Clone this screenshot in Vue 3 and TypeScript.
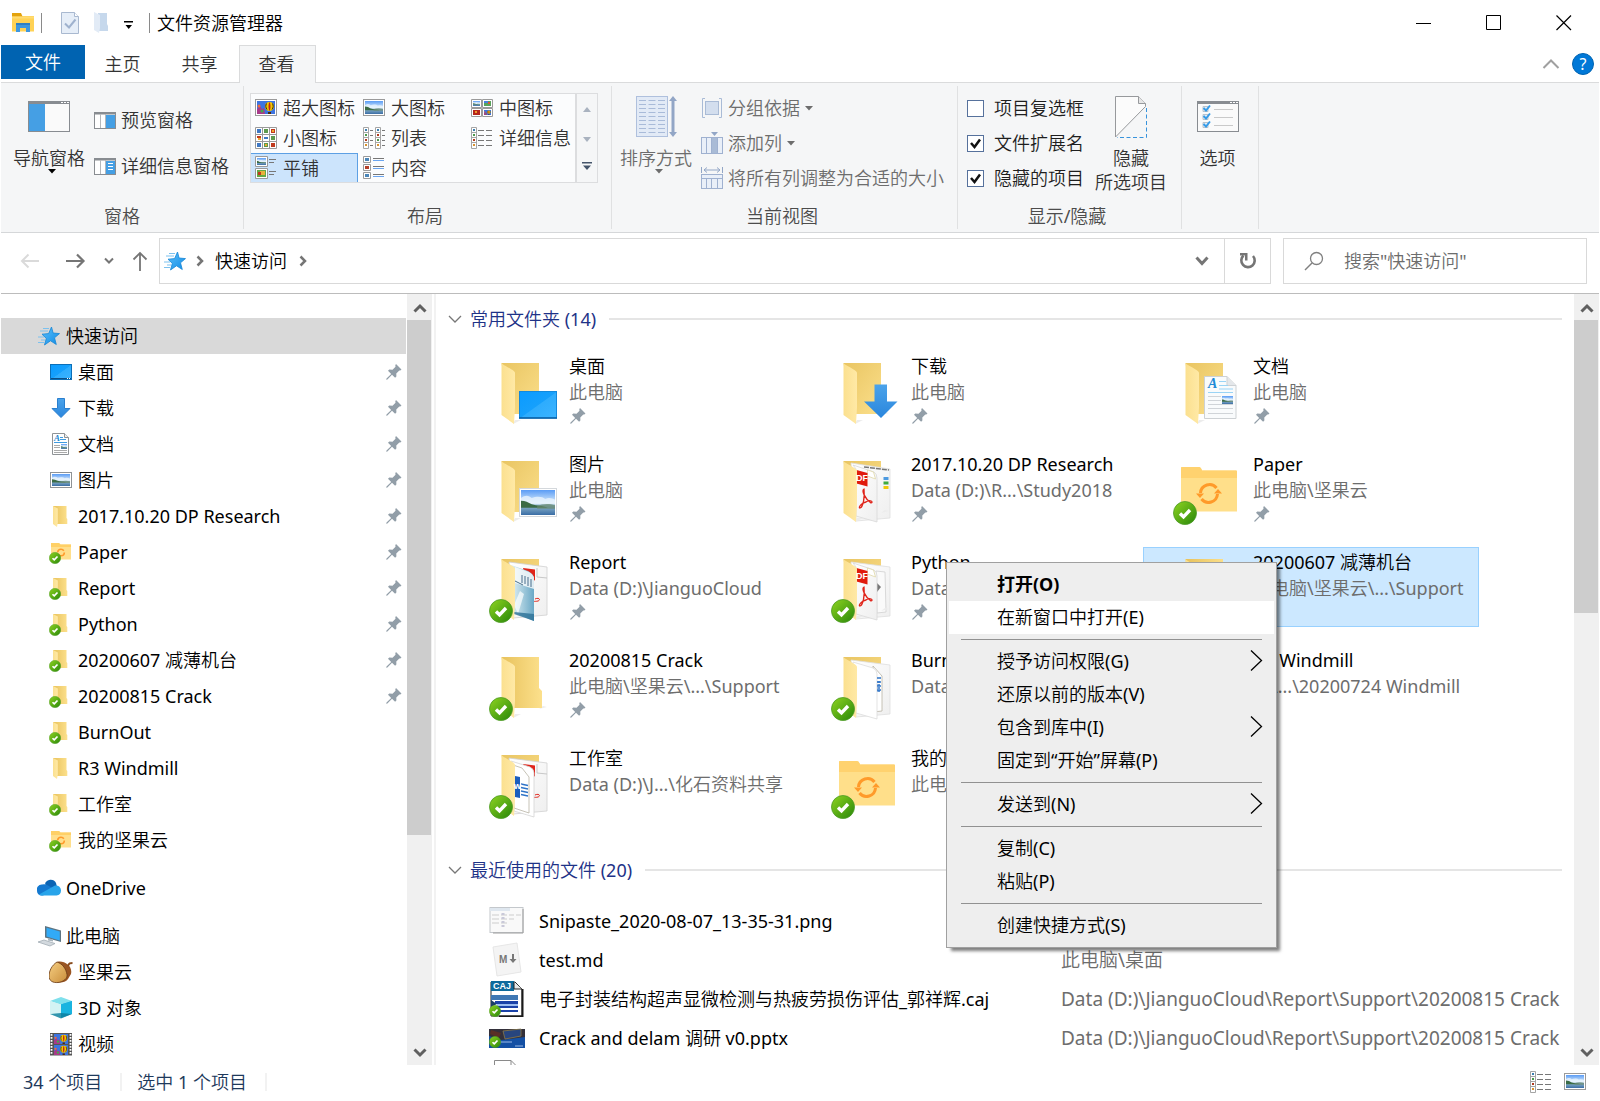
<script setup lang="ts">
import { ref } from 'vue'

interface NavItem { icon: string; label: string; level: number; pin?: boolean; badge?: boolean; gap?: boolean; selected?: boolean }
interface Tile { icon: string; name: string; path: string; pin?: boolean; badge?: boolean; selected?: boolean }
interface RecentFile { icon: string; name: string; path: string }
interface MenuItem { label?: string; bold?: boolean; hover?: boolean; sub?: boolean }

const tabs: string[] = ['主页', '共享', '查看']

const layouts = [
  { icon: 'g-xl', label: '超大图标' },
  { icon: 'g-lg', label: '大图标' },
  { icon: 'g-md', label: '中图标' },
  { icon: 'g-sm', label: '小图标' },
  { icon: 'g-list', label: '列表' },
  { icon: 'g-detail', label: '详细信息' },
  { icon: 'g-tile', label: '平铺' },
  { icon: 'g-content', label: '内容' },
]
const activeLayout = ref('平铺')

const toggles = ref([
  { id: 'show-boxes', label: '项目复选框', on: false },
  { id: 'show-ext', label: '文件扩展名', on: true },
  { id: 'show-hidden', label: '隐藏的项目', on: true },
])

const navItems: NavItem[] = [
  { icon: 'star', label: '快速访问', level: 0, selected: true },
  { icon: 'desktop', label: '桌面', level: 1, pin: true },
  { icon: 'download', label: '下载', level: 1, pin: true },
  { icon: 'doc', label: '文档', level: 1, pin: true },
  { icon: 'picture', label: '图片', level: 1, pin: true },
  { icon: 'folder', label: '2017.10.20 DP Research', level: 1, pin: true },
  { icon: 'nut-folder', label: 'Paper', level: 1, pin: true, badge: true },
  { icon: 'folder', label: 'Report', level: 1, pin: true, badge: true },
  { icon: 'folder', label: 'Python', level: 1, pin: true, badge: true },
  { icon: 'folder', label: '20200607 减薄机台', level: 1, pin: true, badge: true },
  { icon: 'folder', label: '20200815 Crack', level: 1, pin: true, badge: true },
  { icon: 'folder', label: 'BurnOut', level: 1, badge: true },
  { icon: 'folder', label: 'R3 Windmill', level: 1 },
  { icon: 'folder', label: '工作室', level: 1, badge: true },
  { icon: 'nut-folder', label: '我的坚果云', level: 1, badge: true },
  { icon: 'onedrive', label: 'OneDrive', level: 0, gap: true },
  { icon: 'pc', label: '此电脑', level: 0, gap: true },
  { icon: 'acorn', label: '坚果云', level: 1 },
  { icon: 'cube', label: '3D 对象', level: 1 },
  { icon: 'video', label: '视频', level: 1 },
]

const tiles: Tile[] = [
  { icon: 't-desktop', name: '桌面', path: '此电脑', pin: true },
  { icon: 't-download', name: '下载', path: '此电脑', pin: true },
  { icon: 't-doc', name: '文档', path: '此电脑', pin: true },
  { icon: 't-picture', name: '图片', path: '此电脑', pin: true },
  { icon: 't-research', name: '2017.10.20 DP Research', path: 'Data (D:)\\R...\\Study2018', pin: true },
  { icon: 't-nut', name: 'Paper', path: '此电脑\\坚果云', pin: true, badge: true },
  { icon: 't-report', name: 'Report', path: 'Data (D:)\\JianguoCloud', pin: true, badge: true },
  { icon: 't-python', name: 'Python', path: 'Data (D:)', pin: true, badge: true },
  { icon: 't-empty', name: '20200607 减薄机台', path: '此电脑\\坚果云\\...\\Support', pin: true, badge: true, selected: true },
  { icon: 't-empty', name: '20200815 Crack', path: '此电脑\\坚果云\\...\\Support', pin: true, badge: true },
  { icon: 't-burnout', name: 'BurnOut', path: 'Data (D:)', badge: true },
  { icon: 't-empty', name: 'R3 Windmill', path: 'D:\\...\\20200724 Windmill' },
  { icon: 't-studio', name: '工作室', path: 'Data (D:)\\J...\\化石资料共享', badge: true },
  { icon: 't-nut', name: '我的坚果云', path: '此电脑', badge: true },
]

const recent: RecentFile[] = [
  { icon: 'f-png', name: 'Snipaste_2020-08-07_13-35-31.png', path: '' },
  { icon: 'f-md', name: 'test.md', path: '此电脑\\桌面' },
  { icon: 'f-caj', name: '电子封装结构超声显微检测与热疲劳损伤评估_郭祥辉.caj', path: 'Data (D:)\\JianguoCloud\\Report\\Support\\20200815 Crack' },
  { icon: 'f-ppt', name: 'Crack and delam 调研 v0.pptx', path: 'Data (D:)\\JianguoCloud\\Report\\Support\\20200815 Crack' },
  { icon: 'f-page', name: '', path: '' },
]

// letters printed on top of document icons
const glyphs: Record<string, string> = {
  doc: 'A',
  't-doc': 'A',
  't-research': 'DF',
  't-python': 'DF',
  't-studio': 'w',
  'f-md': 'M',
  'f-caj': 'CAJ',
}

const menu: MenuItem[] = [
  { label: '打开(O)', bold: true },
  { label: '在新窗口中打开(E)', hover: true },
  {},
  { label: '授予访问权限(G)', sub: true },
  { label: '还原以前的版本(V)' },
  { label: '包含到库中(I)', sub: true },
  { label: '固定到“开始”屏幕(P)' },
  {},
  { label: '发送到(N)', sub: true },
  {},
  { label: '复制(C)' },
  { label: '粘贴(P)' },
  {},
  { label: '创建快捷方式(S)' },
]
</script>

<template>
  <div class="window">
    <!-- shared icon sprite -->
    <svg class="sprite" width="0" height="0" aria-hidden="true">
      <defs>
        <linearGradient id="gFlap" x1="0" y1="0" x2="1" y2="0"><stop offset="0" stop-color="#fbe08f" /><stop offset="1" stop-color="#ffe9a6" /></linearGradient>
        <linearGradient id="gBack" x1="0" y1="0" x2="1" y2="1"><stop offset="0" stop-color="#e9c562" /><stop offset="1" stop-color="#fbdf8b" /></linearGradient>
        <linearGradient id="gBack2" x1="0" y1="0" x2="1" y2="0"><stop offset="0" stop-color="#e8c25c" /><stop offset="1" stop-color="#fce08c" /></linearGradient>
        <linearGradient id="gDesk" x1="0" y1="0" x2="1" y2="1"><stop offset="0" stop-color="#0a9bff" /><stop offset=".5" stop-color="#16a0fc" /><stop offset=".52" stop-color="#2eacfd" /><stop offset="1" stop-color="#3cb4ff" /></linearGradient>
        <linearGradient id="gSky" x1="0" y1="0" x2="0" y2="1"><stop offset="0" stop-color="#5a9cf5" /><stop offset=".5" stop-color="#d8ebfb" /><stop offset=".62" stop-color="#8fb6cc" /><stop offset="1" stop-color="#3a6da5" /></linearGradient>
        <linearGradient id="gArrow" x1="0" y1="0" x2="0" y2="1"><stop offset="0" stop-color="#4ba3ea" /><stop offset="1" stop-color="#2a86dd" /></linearGradient>
        <linearGradient id="gOk" x1="0" y1="0" x2="1" y2="1"><stop offset="0" stop-color="#8fd420" /><stop offset="1" stop-color="#27860a" /></linearGradient>
        <linearGradient id="gPage" x1="0" y1="0" x2="1" y2="1"><stop offset="0" stop-color="#ffffff" /><stop offset="1" stop-color="#efefef" /></linearGradient>
        <linearGradient id="gBlue" x1="0" y1="0" x2="1" y2="0"><stop offset="0" stop-color="#e2f1f5" /><stop offset="1" stop-color="#6aa8c6" /></linearGradient>
        <linearGradient id="gNut" x1="0" y1="0" x2="1" y2="1"><stop offset="0" stop-color="#f6cf83" /><stop offset="1" stop-color="#c98d3a" /></linearGradient>
        <linearGradient id="gStar" x1="0" y1="0" x2="1" y2="1"><stop offset="0" stop-color="#5cc0fa" /><stop offset="1" stop-color="#0f8be6" /></linearGradient>
      </defs>

      <symbol id="pin" viewBox="0 0 16 16">
        <path fill="#929ea8" d="M10 0l5.500 5.500-1.200 1-1-.1-3 3 .1 3-1.300 1.300L6 10.700l-4.600 4.800-1.200.3.300-1.200L5.200 10 2 6.800l1.300-1.200 3.200.1 3-3L9.300 1.300z" />
      </symbol>
      <symbol id="badge" viewBox="0 0 24 24">
        <circle cx="12" cy="12" r="11.500" fill="url(#gOk)" stroke="#4d9a26" stroke-width=".8" />
        <path d="M7 12.500l3.500 3.300L17 9" fill="none" stroke="#fff" stroke-width="3.400" />
      </symbol>
      <symbol id="landscape" viewBox="0 0 38 28" preserveAspectRatio="none">
        <rect width="38" height="28" fill="url(#gSky)" />
        <path d="M0 9c5-4 9-3 12 0 5-2 12-2 15 1 4-2 8-1 11 1v5H0z" fill="#eaf4fd" opacity=".8" />
        <path d="M0 12c5 0 8 2 12 4 6 2 12 1 18 4H0z" fill="#3b6b45" />
        <path d="M18 18c6-3 14-3 20-1v4H18z" fill="#66886c" opacity=".7" />
      </symbol>
      <symbol id="balloon" viewBox="0 0 18 13" preserveAspectRatio="none">
        <rect width="18" height="13" fill="#3d74e0" />
        <path d="M0 8l3-3 2 3 2-1 1 6H0z" fill="#a83a8a" /><circle cx="2" cy="5" r="1.500" fill="#f06a3a" /><circle cx="5" cy="10" r="1.500" fill="#3fae4a" />
        <circle cx="12.500" cy="5.500" r="4.500" fill="#f2c800" /><path d="M12.500 1c-1.300 2-1.300 7 0 9 1.300-2 1.300-7 0-9" fill="#c1201d" /><path d="M9.500 2.500c-1 2-1 4 .5 6M15.500 2.500c1 2 1 4-.5 6" stroke="#3a2a10" fill="none" /><path d="M11 11h3v2h-3z" fill="#4b2a10" />
      </symbol>

      <!-- title bar -->
      <symbol id="explorer" viewBox="0 0 22 20">
        <path d="M0 3h22v15.500H0z" fill="#ffd255" /><path d="M0 0h9l1.500 3.500H0z" fill="#e3a20d" /><path d="M0 3.500h22v2H0z" fill="#ffdb70" />
        <path d="M4 10h14v9h-4v-4H8v4H4z" fill="#3f97de" /><path d="M4 10h14v2H4z" fill="#2f7fc4" />
      </symbol>
      <symbol id="q-check" viewBox="0 0 18 22"><path d="M.5.500h13l4 4v17H.5z" fill="#e6eef8" stroke="#a9b9d0" /><path d="M13.500.5v4h4" fill="#fff" stroke="#a9b9d0" /><path d="M4 11.500l4 4 6.500-8" fill="none" stroke="#9fb2ce" stroke-width="2" /></symbol>
      <symbol id="q-folder" viewBox="0 0 15 22"><path d="M4 1h9v11l1 2v5H4z" fill="#c6d8ec" /><path d="M0 0l6 3v13l-1 5-5-3z" fill="#e2ebf6" /></symbol>

      <!-- ribbon: large, 48 x 46 -->
      <symbol id="r-nav" viewBox="0 0 48 46"><rect x="3.500" y="5.500" width="41" height="30" fill="#fafafa" stroke="#888c91" /><path d="M3 5h42v3H3z" fill="#888c91" /><path d="M4 8h16v27H4z" fill="#459fe4" /><path d="M36 6h2v1h-2zM39 6h2v1h-2zM42 6h2v1h-2z" fill="#fff" /></symbol>
      <symbol id="r-sort" viewBox="0 0 48 46">
        <rect x="4.500" y=".5" width="31" height="40" fill="#e2eaf6" stroke="#afc0dd" />
        <path d="M7 4.500h26M7 8.500h26M7 12.500h26M7 16.500h26M7 20.500h26M7 24.500h26M7 28.500h26M7 32.500h26M7 36.500h26" stroke="#a9bbd9" stroke-width="1.200" stroke-dasharray="7 2.500" />
        <path d="M39.500 4h3v33h-3z" fill="#92a6c6" /><path d="M41 0l4 5h-8zM41 41l4-5h-8z" fill="#92a6c6" />
      </symbol>
      <symbol id="r-hide" viewBox="0 0 48 46"><path d="M8.500 41V.5h23l7 7v3z" fill="#fbfbfb" stroke="#97999c" /><path d="M31.500.5v7h7" fill="#e6e6e6" stroke="#97999c" /><path d="M39.500 12v29.500H10" fill="none" stroke="#3793dc" stroke-dasharray="4 2.500" /></symbol>
      <symbol id="r-options" viewBox="0 0 48 46"><rect x="3.500" y="5.500" width="41" height="30" fill="#fafafa" stroke="#888c91" /><path d="M3 5h42v3H3z" fill="#888c91" /><path d="M36 6h2v1h-2zM39 6h2v1h-2zM42 6h2v1h-2z" fill="#fff" /><path d="M9 10.500h5v5H9zM9 18.500h5v5H9zM9 26.500h5v5H9z" fill="#e5edf5" stroke="#b9c3cc" /><path d="M9.500 12l2.500 2.500 4-5M9.500 20l2.500 2.500 4-5M9.500 28l2.500 2.500 4-5" fill="none" stroke="#359be8" stroke-width="2" /><path d="M20 13.500h19M20 21.500h19M20 29.500h19" stroke="#c9c9c9" /></symbol>

      <!-- ribbon: small, 22 x 22 -->
      <symbol id="r-preview" viewBox="0 0 22 22"><rect x=".5" y="3.500" width="21" height="16" fill="#fff" stroke="#888c91" /><path d="M0 3h22v2.500H0z" fill="#888c91" /><path d="M6.500 5v14M11.500 5v14" stroke="#b5b8bb" /><path d="M12 6h9v13h-9z" fill="#459fe4" /></symbol>
      <symbol id="r-details" viewBox="0 0 22 22"><use href="#r-preview" /><path d="M14 8.500h5M14 11.500h5M14 14.500h5" stroke="#fff" /></symbol>
      <symbol id="r-group" viewBox="0 0 22 22"><path d="M4 1.500H1.500v19H4M18 1.500h2.500v19H18" fill="none" stroke="#a9bbd6" /><rect x="4.500" y="4.500" width="13" height="13" fill="#d3deee" stroke="#a9bbd6" /></symbol>
      <symbol id="r-addcol" viewBox="0 0 22 22"><rect x=".5" y="5.500" width="21" height="16" fill="#e9eff8" stroke="#9fb1d0" /><path d="M5.500 5v17M10.500 5v17M16.500 5v17" stroke="#9fb1d0" /><path d="M11 6h5v15h-5z" fill="#a9bbd6" /><path d="M10 0h7l-3.500 4z" fill="#92a6c6" /></symbol>
      <symbol id="r-fit" viewBox="0 0 22 22"><path d="M.5 0v6M21.500 0v6M3 3h16M6 .5L3 3l3 2.500M16 .5L19 3l-3 2.500" fill="none" stroke="#92a6c6" /><rect x=".5" y="7.500" width="21" height="14" fill="#e9eff8" stroke="#9fb1d0" /><path d="M1 11.500h20M5.500 12v10M10.500 12v10M16.500 12v10" stroke="#9fb1d0" /></symbol>

      <!-- layout gallery, 24 x 24 -->
      <symbol id="g-xl" viewBox="0 0 24 24"><rect x=".5" y="3.500" width="21" height="16" fill="#fff" stroke="#9a9a9a" /><use href="#balloon" x="2" y="5" width="18" height="13" /></symbol>
      <symbol id="g-lg" viewBox="0 0 24 24"><rect x=".5" y="3.500" width="21" height="16" fill="#fff" stroke="#9a9a9a" /><use href="#landscape" x="2" y="5" width="18" height="13" /></symbol>
      <symbol id="g-md" viewBox="0 0 24 24"><path d="M.5 3.500h10v8H.5zM11.500 3.500h10v8h-10zM.5 12.500h10v8H.5zM11.500 12.500h10v8h-10z" fill="#fff" stroke="#9a9a9a" /><use href="#landscape" x="2" y="5" width="7" height="5" /><path d="M13 5h7v5h-7z" fill="#58a35a" /><path d="M13 5h4v2h-4z" fill="#4b7fe0" /><path d="M17 6h2v2h-2z" fill="#e0523a" /><path d="M2 14h7v5H2z" fill="#b5251a" /><path d="M4 15h2v2H4z" fill="#f09a2a" /><use href="#balloon" x="13" y="14" width="7" height="5" /></symbol>
      <symbol id="g-sm" viewBox="0 0 24 24">
        <path d="M.5 1.500h21v21H.5zM7.500 1v22M14.500 1v22M0 8.500h22M0 15.500h22" fill="#fff" stroke="#9a9a9a" />
        <path d="M2 3h4v4H2zM9 11h4v2H9zM2 17h4v4H2z" fill="#3e78c4" /><path d="M9 3h4v4H9zM16 10h4v4h-4zM9 17h4v4H9z" fill="#5c9a4e" /><path d="M16 3h4v4h-4zM2 10h4v2H2zM16 17h4v4h-4z" fill="#c03a1e" /><path d="M3 12h3v2H3zM17 4h2v2h-2zM10 18h2v2h-2z" fill="#f0a830" />
      </symbol>
      <symbol id="g-list" viewBox="0 0 24 24">
        <path d="M.5 1.500h5v21h-5zM0 6.500h6M0 11.500h6M0 16.500h6M12.500 1.500h5v21h-5zM12 6.500h6M12 11.500h6M12 16.500h6" fill="#fff" stroke="#a5a5a5" />
        <path d="M2 3h2v2H2zM14 3h2v2h-2z" fill="#3c7fb0" /><path d="M2 8h2v2H2zM14 13h2v2h-2z" fill="#4c9a4c" /><path d="M2 13h2v2H2zM14 8h2v2h-2z" fill="#b03a1e" /><path d="M2 18h2v2H2zM14 18h2v2h-2z" fill="#d9922e" />
        <path d="M7 4.500h3M7 9.500h3M7 14.500h3M7 19.500h3M19 4.500h3M19 9.500h3M19 14.500h3M19 19.500h3" stroke="#777" />
      </symbol>
      <symbol id="g-detail" viewBox="0 0 24 24">
        <path d="M.5 1.500h5v21h-5zM0 6.500h6M0 11.500h6M0 16.500h6" fill="#fff" stroke="#a5a5a5" />
        <path d="M2 3h2v2H2z" fill="#3c7fb0" /><path d="M2 8h2v2H2z" fill="#4c9a4c" /><path d="M2 13h2v2H2z" fill="#b03a1e" /><path d="M2 18h2v2H2z" fill="#d9922e" />
        <path d="M7 4.500h6M15 4.500h6M7 9.500h6M15 9.500h6M7 14.500h6M15 14.500h6M7 19.500h6M15 19.500h6" stroke="#777" />
      </symbol>
      <symbol id="g-tile" viewBox="0 0 24 24"><path d="M.5 .5h12v10H.5zM.5 12.500h12v10H.5z" fill="#fff" stroke="#9a9a9a" /><use href="#landscape" x="2" y="2" width="9" height="7" /><path d="M2 14h9v7H2z" fill="#64a846" /><path d="M5 15h5v4H5z" fill="#e8b13a" /><path d="M3 16h3v3H3z" fill="#c03a1e" /><path d="M14 3.500h7M14 6.500h5M14 15.500h7M14 18.500h5" stroke="#777" /></symbol>
      <symbol id="g-content" viewBox="0 0 24 24"><path d="M.5 .5h7v6h-7zM.5 8.500h7v6h-7zM.5 16.500h7v6h-7z" fill="#fff" stroke="#9a9a9a" /><path d="M2 2h4v3H2zM2 18h4v3H2z" fill="#4b86b8" /><path d="M2 10h4v3H2z" fill="#b5402a" /><path d="M10 2.500h11M10 10.500h11M10 18.500h11" stroke="#777" /><path d="M10 4.500h11M10 12.500h11M10 20.500h11" stroke="#6aa5f0" /></symbol>

      <!-- navigation pane, 24 x 24 -->
      <symbol id="star" viewBox="0 0 24 24"><path d="M14.500 3l1.600 6 6.400.6-5 4.200 1.800 6.700-5.800-3.700L7.500 21l1.800-6.600L5 10.200l6.600-.6z" fill="url(#gStar)" stroke="#1687d6" stroke-width=".8" /><path d="M6 4.500h6M3 7h8M1 13h6M4 16h4M1 18.500h6" stroke="#7cc1ee" stroke-width="1" /></symbol>
      <symbol id="desktop" viewBox="0 0 24 24"><rect x="1.500" y="4.500" width="21" height="15" fill="url(#gDesk)" stroke="#0b6fb8" /><path d="M2 18.500h20" stroke="#0d4f86" /><path d="M18 18.500h1M20 18.500h1" stroke="#fff" /></symbol>
      <symbol id="download" viewBox="0 0 24 24"><path d="M8.500 2.500h7v10h5.500L12 21.500 3 12.500h5.500z" fill="url(#gArrow)" stroke="#2a7fcf" /></symbol>
      <symbol id="doc" viewBox="0 0 24 24"><path d="M3.500 1.500h12l4 4v17h-16z" fill="#fff" stroke="#8f9396" /><path d="M15.500 1.500v4h4" fill="#eee" stroke="#8f9396" /><path d="M11 5.500h3M11 7.500h6M5 10.500h13" stroke="#3f9be0" /><path d="M5 13.500h6M5 15.500h6M5 18.500h13M5 20.500h13" stroke="#aaa" /><use href="#landscape" x="12" y="12" width="6" height="5" /></symbol>
      <symbol id="picture" viewBox="0 0 24 24"><rect x="1.500" y="4.500" width="21" height="15" fill="#fff" stroke="#8f9396" /><use href="#landscape" x="3" y="6" width="18" height="12" /></symbol>
      <symbol id="folder" viewBox="0 0 24 24"><path d="M4 2h13.500v12l.8 1v5H8z" fill="url(#gBack2)" /><path d="M4 2l4.800 2.500v14L8 23l-4-3z" fill="url(#gFlap)" /></symbol>
      <symbol id="nut-folder" viewBox="0 0 24 24"><path d="M2 3h8l1.500 1.500H22v15H2z" fill="#ffdf8c" /><path d="M2 3h8l1.500 1.500H22V7H2z" fill="#ffd066" /><circle cx="12" cy="12.500" r="3.300" fill="none" stroke="#ff9a2a" stroke-width="1.600" stroke-dasharray="8 2.400" /></symbol>
      <symbol id="onedrive" viewBox="0 0 24 24"><path d="M8 8a6 6 0 0 1 11-1l1 4-7 3z" fill="#0a64b4" /><path d="M0 15a5 5 0 0 1 5-6.500 7 7 0 0 1 6 1l7 4-12 6H4.500A4.500 4.500 0 0 1 0 15z" fill="#1479d0" /><path d="M18 9.500a5 5 0 0 1 6 5 5 5 0 0 1-4.500 5H4a5 5 0 0 1-2-1z" fill="#28a4ea" /></symbol>
      <symbol id="pc" viewBox="0 0 24 24"><path d="M8 2l16 4.500V18L8 13.500z" fill="#5d7482" /><path d="M9.500 3.800l13.300 3.700v9L9.500 12.500z" fill="#31aaf7" /><path d="M11 14l5 1.500v2l-5-1z" fill="#a8b3bb" /><path d="M1 18l6-2 11 3.500-5 2.500z" fill="#d3d9de" stroke="#9aa5ae" stroke-width=".7" /></symbol>
      <symbol id="acorn" viewBox="0 0 24 24"><path d="M8 2c7-2 16 4 14 12l-3 5c-3 4-8 4-12 3C0 21-1 15 2 9z" fill="#9a5522" /><path d="M8 2C3 5 0 11 0 16c0 5 4 7 9 6.500 5-.5 10-4 9-8C17 9 14 4 8 2z" fill="url(#gNut)" stroke="#6a3a15" stroke-width=".8" /><path d="M19 6c1-3 2-3 4.500-3" fill="none" stroke="#8a4c1e" stroke-width="2" /></symbol>
      <symbol id="cube" viewBox="0 0 24 24"><path d="M1 5l11-4 11 4-11 4z" fill="#7fe0ec" /><path d="M1 5l11 3.500V22L1 18z" fill="#c9eff2" /><path d="M23 5L12 8.500V22l11-4z" fill="#0f9fd6" /><path d="M1 18l11-3 11 3-11 4.500z" fill="#0e7f9c" opacity=".8" /><path d="M1 5l11 3.500V17L1 18z" fill="#d4f3f4" /><path d="M23 5L12 8.500V17l11 1z" fill="#19b4e0" /></symbol>
      <symbol id="video" viewBox="0 0 24 24"><path d="M1 1h22v22.500H1z" fill="#555" /><path d="M2.500 2v21M21.500 2v21" stroke="#fff" stroke-width="1.800" stroke-dasharray="1.800 1.200" /><use href="#balloon" x="5" y="2" width="14" height="10" /><use href="#balloon" x="5" y="13" width="14" height="10" /></symbol>

      <!-- folder tiles, 72 x 72 -->
      <symbol id="fold-back" viewBox="0 0 72 72"><path d="M12.500 6H50v51H20z" fill="url(#gBack)" /></symbol>
      <symbol id="fold-flap" viewBox="0 0 72 72"><path d="M12.500 6c1 2 13 7 13.500 9.700V50l-1 17-12.500-9z" fill="url(#gFlap)" /></symbol>
      <symbol id="fold-shadow" viewBox="0 0 72 72"><path d="M24 67l8-4h-6zM50 58l8-2-4-1z" fill="#ececec" /></symbol>
      <symbol id="pdf" viewBox="0 0 72 72">
        <path d="M22 10l21 7q3 2 3 6v44L25 61V14z" fill="url(#gPage)" stroke="#d8d8d8" stroke-width=".8" />
        <path d="M36.500 15l6 2 2 7-8-3z" fill="#fff" stroke="#e0d8a8" stroke-width=".8" />
        <path d="M25.500 15l11 3v13.500l-11-3z" fill="#e01b0d" />
        <path d="M33 34c-3 1 1 10 7 14 3-1-1-4-5-1-5 1-8 6-6 6 3-1 5-10 4-19z" fill="none" stroke="#e0241a" stroke-width="1.300" />
      </symbol>
      <symbol id="t-empty" viewBox="0 0 72 72"><use href="#fold-shadow" /><path d="M12.500 6H50v31l3 3v17H20z" fill="url(#gBack2)" /><use href="#fold-flap" /></symbol>
      <symbol id="t-desktop" viewBox="0 0 72 72"><use href="#fold-back" /><use href="#fold-shadow" /><use href="#fold-flap" /><rect x="30.500" y="34.500" width="37" height="26.500" fill="url(#gDesk)" stroke="#1389dd" /><path d="M30 61h38" stroke="#0a5fa5" stroke-width="1.500" /></symbol>
      <symbol id="t-download" viewBox="0 0 72 72"><use href="#fold-back" /><use href="#fold-shadow" /><use href="#fold-flap" /><path d="M43.500 27.500H56v17h10.500L50 61 33 44.500h10.500z" fill="url(#gArrow)" /></symbol>
      <symbol id="t-doc" viewBox="0 0 72 72"><use href="#fold-back" /><use href="#fold-shadow" /><use href="#fold-flap" /><path d="M31.500 19.500H54l9 9v33H31.500z" fill="#f9fbfc" stroke="#cdd1d4" /><path d="M54 19.500v9h9" fill="#e4e7ea" stroke="#cdd1d4" /><path d="M46 24.500h7M46 28.500h9M46 32h14M35 35.500h25" stroke="#9ad4f5" stroke-width="1.200" /><path d="M35 39.500h13M35 43.500h13M35 47.500h25M35 51.500h25M35 56.500h25" stroke="#d0d4d8" /><use href="#landscape" x="49" y="39" width="11" height="8" /></symbol>
      <symbol id="t-picture" viewBox="0 0 72 72"><use href="#fold-back" /><use href="#fold-shadow" /><use href="#fold-flap" /><rect x="30.500" y="33.500" width="37" height="28" fill="#fff" stroke="#d4d8dc" /><use href="#landscape" x="32" y="35" width="34" height="25" /></symbol>
      <symbol id="t-nut" viewBox="0 0 72 72"><path d="M8 13q0-1 1-1h17q2 0 3 3.500h34q1 0 1 1v40H8z" fill="#ffdf8a" /><path d="M8 13q0-1 1-1h17q2 0 3 3.500h34q1 0 1 1V23H8z" fill="#ffd26f" /><path d="M27.500 38a9 9 0 0 1 16-5M44.500 39a9 9 0 0 1-16 5" fill="none" stroke="#ff9a2a" stroke-width="3" /><path d="M23 38.500h8l-4 4.500zM41 38.500h8L45 34z" fill="#ff9a2a" /></symbol>
      <symbol id="t-research" viewBox="0 0 72 72"><use href="#fold-back" /><path d="M20 8l39 6v49l-34 3z" fill="url(#gPage)" stroke="#dedede" stroke-width=".8" /><path d="M33 12l25 3" stroke="#777" stroke-width="1.500" stroke-dasharray="5 1" /><path d="M52.500 22h5v3h-5z" fill="#4d9ae0" /><path d="M52.500 26.500h5v3h-5z" fill="#3faa3f" /><path d="M52.500 31h5v3h-5z" fill="#f0c808" /><use href="#fold-shadow" /><use href="#pdf" /><use href="#fold-flap" /></symbol>
      <symbol id="t-python" viewBox="0 0 72 72"><use href="#fold-back" /><path d="M20 9l39 5v49l-34 3z" fill="url(#gPage)" stroke="#dedede" stroke-width=".8" /><path d="M45 18l9 1 1 40-9 1z" fill="#fafafa" stroke="#d0d0d0" stroke-width=".8" /><path d="M46 30v9l4-5z" fill="#777" /><use href="#fold-shadow" /><use href="#pdf" /><use href="#fold-flap" /></symbol>
      <symbol id="t-report" viewBox="0 0 72 72"><use href="#fold-back" /><path d="M20 9l38 5v48l-34 3z" fill="url(#gPage)" stroke="#d0d0d0" stroke-width=".8" /><path d="M34 15l12 1.500v11L36 24z" fill="#e0241a" /><path d="M48 15v9l10 1" fill="none" stroke="#c8c8c8" /><path d="M46 46c4-2 6 1 3 2-4 1-3-1-6 3" fill="none" stroke="#e0241a" /><path d="M22 12l17 6q6 3 6 8v42l-20-8z" fill="url(#gBlue)" /><path d="M26 14l14 5q4 2 5 5v12l-19-6z" fill="#fbfcfd" opacity=".8" /><path d="M26 28l8 4M33 22v8M36 23v8M39 24v9M42 26v8" stroke="#486f8c" /><path d="M25 52l6-14 4 3-6 20z" fill="#fff" opacity=".7" /><path d="M25 59l20 2v7l-20-7z" fill="#2c7096" opacity=".8" /><use href="#fold-flap" /></symbol>
      <symbol id="t-burnout" viewBox="0 0 72 72"><use href="#fold-back" /><path d="M20 9l39 5v49l-34 3z" fill="url(#gPage)" stroke="#dedede" stroke-width=".8" /><path d="M42 15l9 10v35l-9 1z" fill="#fff" stroke="#b9b4a5" stroke-width=".8" /><path d="M45 31h4M45 34h4M45 37h4M45 40h4" stroke="#2f74c8" stroke-width="1.500" /><path d="M22 11l20 6q4 2 4 6v45L25 62z" fill="#fff" stroke="#dcdcdc" stroke-width=".8" /><path d="M46 27h4M46 31h4M46 35h4M46 39h4" stroke="#2f74c8" stroke-width="1.500" /><use href="#fold-flap" /></symbol>
      <symbol id="t-studio" viewBox="0 0 72 72"><use href="#fold-back" /><path d="M20 9l38 5v48l-34 3z" fill="url(#gPage)" stroke="#d0d0d0" stroke-width=".8" /><path d="M34 15l12 1.500v11L36 24z" fill="#e0241a" /><path d="M48 15v9l10 1" fill="none" stroke="#c8c8c8" /><path d="M46 46c4-2 6 1 3 2-4 1-3-1-6 3" fill="none" stroke="#e0241a" /><path d="M22 12l19 6q4 2 4 6v44L25 62z" fill="#fff" stroke="#d4d4d4" stroke-width=".8" /><path d="M24 16l9 3 7 9v36l-15-5z" fill="#fff" stroke="#b9b4a5" stroke-width=".8" /><path d="M26 27l5 1v21l-5-1z" fill="#1b5dbe" /><path d="M32 35l7 1.500M32 38.500l7 1.500M32 42l7 1.500M32 45.500l7 1.500" stroke="#2f74c8" stroke-width="1.300" /><use href="#fold-flap" /></symbol>

      <!-- recent files, 36 x 36 -->
      <symbol id="f-png" viewBox="0 0 36 36"><rect x="1" y="4.500" width="33" height="25" fill="#f9f9f9" stroke="#c4c8cc" /><path d="M1 5h20v3H1z" fill="#dfe7ef" /><path d="M3 12h7M3 16h7M3 20h7M12 12h6M12 16h6M12 20h6M20 12h5M20 16h5M27 12h5" stroke="#dcdcdc" stroke-width="1.500" /><path d="M14 10v16" stroke="#c9c9d9" stroke-width="3" stroke-dasharray="2 2" /><path d="M34 6v24H4" fill="none" stroke="#9e9e9e" /></symbol>
      <symbol id="f-md" viewBox="0 0 36 36"><path d="M4 5l24-4 4 29-24 4z" fill="#f4f4f4" stroke="#e6e6e6" /><path d="M24 12v6" stroke="#777" stroke-width="2" /><path d="M20.500 17h7L24 21z" fill="#777" /></symbol>
      <symbol id="f-caj" viewBox="0 0 36 36"><path d="M2 1h24l7 7v27H2z" fill="#fff" stroke="#222" /><path d="M33.500 8v27.500H10" fill="none" stroke="#1a1a1a" stroke-width="2" /><path d="M2 0h23v10H2z" fill="#0d6a9c" /><path d="M25 1v7h8" fill="#e8e8e8" stroke="#222" /><path d="M2 14h27v5H2z" fill="#3f78b4" /><path d="M6 20h23v3H6zM8 25h21v2H8zM8 29h21v2H8z" fill="#1b42a8" /><path d="M8 23h21v2H8z" fill="#9dbdf0" /><path d="M2 19l6 4-6 3z" fill="#1c3f66" /><use href="#badge" x="0" y="24" width="12" height="12" /></symbol>
      <symbol id="f-ppt" viewBox="0 0 36 36"><path d="M0 9h36v19H0z" fill="#1450a4" /><path d="M0 9h36v8L12 20 0 16z" fill="#33303a" /><path d="M14 11l18-2v7l-16 3z" fill="#27457e" stroke="#8b7a49" stroke-width=".8" /><path d="M2 10l10 3-2 5-9-4z" fill="#5a3026" /><path d="M11 22h12M26 26h8" stroke="#9dbbe6" /><use href="#badge" x="0" y="16" width="12" height="12" /></symbol>
      <symbol id="f-page" viewBox="0 0 36 36"><path d="M5.500 36V1.500H22l6 6V36" fill="#fff" stroke="#8a8a8a" /><path d="M22 1.500v6h6" fill="none" stroke="#8a8a8a" /></symbol>
    </svg>

    <header class="titlebar">
      <svg class="app-icon" width="22" height="20"><use href="#explorer" /></svg>
      <i class="vline"></i>
      <button class="quick q1" aria-label="属性"><svg width="18" height="22"><use href="#q-check" /></svg></button>
      <button class="quick q2" aria-label="新建文件夹"><svg width="15" height="22"><use href="#q-folder" /></svg></button>
      <button class="quick q3" aria-label="自定义快速访问工具栏"><svg width="10" height="8" viewBox="0 0 10 8"><path d="M0 0h9v1.500H0zM1.500 4h6.500L4.700 8z" /></svg></button>
      <i class="vline"></i>
      <h1>文件资源管理器</h1>
      <div class="win-buttons">
        <button aria-label="最小化"><svg width="16" height="16"><path d="M0 8.500h15" stroke="#000" /></svg></button>
        <button aria-label="最大化"><svg width="16" height="16"><path d="M.5.500h14v14H.5z" fill="none" stroke="#000" /></svg></button>
        <button aria-label="关闭"><svg width="16" height="16"><path d="M.5.500l14.500 14.500M15 .5L.5 15" stroke="#000" stroke-width="1.200" /></svg></button>
      </div>
    </header>

    <nav class="tabs">
      <button class="file-tab">文件</button>
      <button v-for="t in tabs" :key="t" class="tab" :class="{ active: t === '查看' }">{{ t }}</button>
      <div class="tab-tools">
        <button aria-label="最小化功能区"><svg width="18" height="12" viewBox="0 0 18 12"><path d="M1.500 10L9 2.500l7.500 7.500" fill="none" stroke="#a0a0a0" stroke-width="2" /></svg></button>
        <button class="help" aria-label="帮助">?</button>
      </div>
    </nav>

    <section class="ribbon">
      <div class="group g-panes">
        <div class="body">
          <button class="big"><svg width="48" height="46"><use href="#r-nav" /></svg><span>导航窗格</span><svg class="drop" width="8" height="5"><path d="M0 0h8L4 4.500z" /></svg></button>
          <div class="stack wide">
            <button class="small"><svg width="22" height="22"><use href="#r-preview" /></svg>预览窗格</button>
            <button class="small"><svg width="22" height="22"><use href="#r-details" /></svg>详细信息窗格</button>
          </div>
        </div>
        <div class="caption">窗格</div>
      </div>

      <div class="group g-layout">
        <div class="body">
          <div class="gallery">
            <button v-for="l in layouts" :key="l.label" class="cell" :class="{ on: l.label === activeLayout }" @click="activeLayout = l.label">
              <svg width="24" height="24"><use :href="'#' + l.icon" /></svg>{{ l.label }}
            </button>
          </div>
          <div class="gallery-scroll">
            <button aria-label="上一行"><svg width="8" height="5"><path d="M0 5h8L4 0z" fill="#a9b2bf" /></svg></button>
            <button aria-label="下一行"><svg width="8" height="5"><path d="M0 0h8L4 5z" fill="#a9b2bf" /></svg></button>
            <button aria-label="更多"><svg width="10" height="8"><path d="M0 0h10v1.500H0zM1 3.500h8L5 8z" fill="#44546a" /></svg></button>
          </div>
        </div>
        <div class="caption">布局</div>
      </div>

      <div class="group g-view dim">
        <div class="body">
          <button class="big"><svg width="48" height="46"><use href="#r-sort" /></svg><span>排序方式</span><svg class="drop" width="8" height="5"><path d="M0 0h8L4 4.500z" /></svg></button>
          <div class="stack">
            <button class="small"><svg width="22" height="22"><use href="#r-group" /></svg>分组依据<svg width="8" height="5"><path d="M0 0h8L4 4.500z" fill="#6d6d6d" /></svg></button>
            <button class="small"><svg width="22" height="22"><use href="#r-addcol" /></svg>添加列<svg width="8" height="5"><path d="M0 0h8L4 4.500z" fill="#6d6d6d" /></svg></button>
            <button class="small"><svg width="22" height="22"><use href="#r-fit" /></svg>将所有列调整为合适的大小</button>
          </div>
        </div>
        <div class="caption">当前视图</div>
      </div>

      <div class="group g-show">
        <div class="body">
          <div class="stack">
            <label v-for="t in toggles" :key="t.id" class="check" :for="t.id"><input :id="t.id" v-model="t.on" type="checkbox" />{{ t.label }}</label>
          </div>
          <button class="big"><svg width="48" height="46"><use href="#r-hide" /></svg><span>隐藏<br />所选项目</span></button>
        </div>
        <div class="caption">显示/隐藏</div>
      </div>

      <div class="group g-options">
        <div class="body"><button class="big"><svg width="48" height="46"><use href="#r-options" /></svg><span>选项</span></button></div>
      </div>
    </section>

    <div class="addressbar">
      <div class="history">
        <button aria-label="后退"><svg width="20" height="16"><path d="M19 8H2M8.500 1.500L2 8l6.500 6.500" fill="none" stroke="#dadada" stroke-width="2" /></svg></button>
        <button aria-label="前进"><svg width="20" height="16"><path d="M0 8h17.500M11 1.500L17.500 8 11 14.500" fill="none" stroke="#757575" stroke-width="2.200" /></svg></button>
        <button aria-label="最近浏览的位置"><svg width="10" height="8"><path d="M1 1.500l4 4 4-4" fill="none" stroke="#757575" stroke-width="2" /></svg></button>
        <button aria-label="向上"><svg width="16" height="20"><path d="M8 20V2M1.500 8.500L8 2l6.500 6.500" fill="none" stroke="#757575" stroke-width="1.800" /></svg></button>
      </div>
      <div class="path">
        <svg width="24" height="24"><use href="#star" /></svg>
        <svg class="crumb" width="8" height="12"><path d="M1.500 1.500L6 6l-4.500 4.500" fill="none" stroke="#757575" stroke-width="2.500" /></svg>
        <a href="#">快速访问</a>
        <svg class="crumb" width="8" height="12"><path d="M1.500 1.500L6 6l-4.500 4.500" fill="none" stroke="#757575" stroke-width="2.500" /></svg>
        <button class="history-drop" aria-label="历史"><svg width="14" height="10"><path d="M1.500 1.500L7 7.500l5.500-6" fill="none" stroke="#757575" stroke-width="3" /></svg></button>
        <button class="refresh" aria-label="刷新"><svg width="18" height="18" viewBox="0 0 18 18"><path d="M4.500 3.500a6.700 6.700 0 1 0 9.500.5" fill="none" stroke="#757575" stroke-width="2.600" /><path d="M1 1h7.500v7.500H6V3.500H1z" fill="#757575" /></svg></button>
      </div>
      <div class="search">
        <svg width="20" height="20"><circle cx="12.500" cy="7.500" r="6" fill="none" stroke="#808080" stroke-width="1.300" /><path d="M8 12l-7 7" stroke="#808080" stroke-width="1.500" /></svg>
        <input type="text" placeholder="搜索&quot;快速访问&quot;" aria-label="搜索" />
      </div>
    </div>

    <div class="panes">
      <aside class="tree">
        <a v-for="(n, i) in navItems" :key="i" href="#" class="node" :class="{ child: n.level === 1, gap: n.gap, selected: n.selected }">
          <span class="node-icon">
            <svg width="24" height="24"><use :href="'#' + n.icon" /></svg>
            <span v-if="glyphs[n.icon]" class="glyph" :class="n.icon">{{ glyphs[n.icon] }}</span>
            <svg v-if="n.badge" class="mini-badge" width="12" height="12"><use href="#badge" /></svg>
          </span>
          <span class="node-label">{{ n.label }}</span>
          <svg v-if="n.pin" width="16" height="16"><use href="#pin" /></svg>
        </a>
      </aside>
      <div class="scrollbar">
        <svg width="14" height="10"><path d="M1.500 8.500L7 3l5.500 5.500" fill="none" stroke="#606060" stroke-width="3" /></svg>
        <div class="track"><div class="thumb tree-thumb"></div></div>
        <svg width="14" height="10"><path d="M1.500 1.500L7 7l5.500-5.500" fill="none" stroke="#606060" stroke-width="3" /></svg>
      </div>

      <main class="content">
        <h2><svg width="14" height="9"><path d="M1 1l6 6 6-6" fill="none" stroke="#777" stroke-width="1.300" /></svg>常用文件夹 (14)</h2>
        <div class="tiles">
          <a v-for="t in tiles" :key="t.name" href="#" class="tile" :class="{ selected: t.selected }">
            <span class="tile-icon">
              <svg width="72" height="72"><use :href="'#' + t.icon" /></svg>
              <span v-if="glyphs[t.icon]" class="glyph" :class="t.icon">{{ glyphs[t.icon] }}</span>
              <svg v-if="t.badge" class="tile-badge" width="24" height="24"><use href="#badge" /></svg>
            </span>
            <span class="tile-text">
              <span class="name">{{ t.name }}</span>
              <span class="loc">{{ t.path }}</span>
              <svg v-if="t.pin" width="16" height="16"><use href="#pin" /></svg>
            </span>
          </a>
        </div>
        <h2><svg width="14" height="9"><path d="M1 1l6 6 6-6" fill="none" stroke="#777" stroke-width="1.300" /></svg>最近使用的文件 (20)</h2>
        <table class="files">
          <tbody>
            <tr v-for="f in recent" :key="f.icon">
              <td class="f-icon">
                <span class="file-icon">
                  <svg width="36" height="36"><use :href="'#' + f.icon" /></svg>
                  <span v-if="glyphs[f.icon]" class="glyph" :class="f.icon">{{ glyphs[f.icon] }}</span>
                </span>
              </td>
              <td class="f-name">{{ f.name }}</td>
              <td class="f-path">{{ f.path }}</td>
            </tr>
          </tbody>
        </table>
      </main>
      <div class="scrollbar">
        <svg width="14" height="10"><path d="M1.500 8.500L7 3l5.500 5.500" fill="none" stroke="#606060" stroke-width="3" /></svg>
        <div class="track"><div class="thumb main-thumb"></div></div>
        <svg width="14" height="10"><path d="M1.500 1.500L7 7l5.500-5.500" fill="none" stroke="#606060" stroke-width="3" /></svg>
      </div>
    </div>

    <footer class="status">
      <span>34 个项目</span>
      <span>选中 1 个项目</span>
      <div class="view-switch">
        <button aria-label="详细信息视图"><svg width="24" height="24"><use href="#g-detail" /></svg></button>
        <button aria-label="大图标视图"><svg width="24" height="24"><use href="#g-lg" /></svg></button>
      </div>
    </footer>

    <div class="menu" role="menu">
      <template v-for="(m, i) in menu" :key="i">
        <button v-if="m.label" role="menuitem" class="menu-item" :class="{ bold: m.bold, hover: m.hover }">
          {{ m.label }}
          <svg v-if="m.sub" width="13" height="21"><path d="M1 .5l10.500 10L1 20.500" fill="none" stroke="#000" stroke-width="1.300" /></svg>
        </button>
        <hr v-else />
      </template>
    </div>
  </div>
</template>

<style>
body {
  margin: 0;
  background: #fff;
}
</style>

<style scoped>
.window {
  position: relative;
  display: flex;
  flex-direction: column;
  height: 100vh;
  box-sizing: border-box;
  padding: 0 1px;
  overflow: hidden;
  background: #fff;
  color: #000;
  font: 18px/24px "Noto Sans", "Noto Sans CJK SC DemiLight", "Noto Sans CJK SC Light", "Noto Sans CJK SC", sans-serif;
}
.window * {
  box-sizing: border-box;
}
svg {
  flex: none;
  display: block;
}
.sprite {
  position: absolute;
}
button {
  font: inherit;
  color: inherit;
  background: none;
  border: 0;
  padding: 0;
  margin: 0;
  white-space: nowrap;
}
a {
  color: inherit;
  text-decoration: none;
}

/* title bar */
.titlebar {
  flex: none;
  display: flex;
  align-items: center;
  height: 45px;
  padding-left: 11px;
}
.vline {
  width: 1px;
  height: 20px;
  margin-left: 7px;
  background: #8a8a8a;
}
.q1 { margin-left: 19px; }
.q2 { margin-left: 15px; }
.q3 { margin: 4px 8px 0 15px; }
h1 {
  margin: 0 0 0 7px;
  font: inherit;
}
.win-buttons {
  display: flex;
  height: 100%;
  margin-left: auto;
}
.win-buttons button {
  width: 70px;
  display: flex;
  align-items: center;
  justify-content: center;
}

/* ribbon tabs */
.tabs {
  flex: none;
  display: flex;
  height: 38px;
  border-bottom: 1px solid #dadbdc;
  color: #333;
}
.file-tab {
  width: 84px;
  height: 34px;
  background: #0063b1;
  color: #fff;
}
.tab {
  width: 77px;
  height: 38px;
  padding: 0 2px 2px 0;
  border: 1px solid transparent;
  border-bottom: 0;
}
.tab.active {
  background: #f5f6f7;
  border-color: #dadbdc;
}
.tab-tools {
  display: flex;
  align-items: center;
  gap: 12px;
  margin-left: auto;
  padding-right: 5px;
}
.help {
  width: 22px;
  height: 22px;
  border-radius: 50%;
  background: #0078d7;
  border: 1px solid #0063b1;
  color: #fff;
  font-size: 16px;
  line-height: 20px;
}

/* ribbon */
.ribbon {
  flex: none;
  display: flex;
  height: 150px;
  padding: 3px 0;
  background: #f5f6f7;
  border-bottom: 1px solid #d5d7d9;
  color: #333;
}
.group {
  display: flex;
  flex-direction: column;
  border-right: 1px solid #e0e1e2;
}
.body {
  flex: 1;
  display: flex;
  align-items: flex-start;
}
.caption {
  height: 26px;
  padding-right: 5px;
  line-height: 26px;
  text-align: center;
  color: #4c4c4c;
}
.g-panes { width: 243px; }
.g-panes .caption { padding-right: 0; }
.g-layout { width: 368px; }
.g-view { width: 346px; }
.g-show { width: 224px; }
.g-options { width: 77px; }
.big {
  width: 72px;
  display: flex;
  flex-direction: column;
  align-items: center;
  gap: 4px;
  margin-top: 10px;
}
.drop {
  margin: -5px 0 0 5px;
}
.stack {
  display: flex;
  flex-direction: column;
  gap: 11px;
  padding-top: 10px;
}
.stack.wide {
  gap: 22px;
  padding-top: 22px;
}
.small {
  display: flex;
  align-items: center;
  gap: 5px;
  height: 24px;
}
.g-panes .body {
  padding-left: 12px;
  gap: 9px;
}
.g-layout .body {
  padding: 7px 6px 0;
}
.g-view .body {
  padding-left: 8px;
  gap: 9px;
}
.g-show .body {
  padding-left: 9px;
  gap: 11px;
}
.g-options .body {
  justify-content: center;
  padding-right: 5px;
}
.dim .body {
  color: #6d6d6d;
}
.dim .drop {
  fill: #6d6d6d;
}
.gallery {
  display: grid;
  grid-template-columns: 108px 108px 110px;
  grid-auto-rows: 30px;
  background: #fbfcfd;
  outline: 1px solid #dcdddf;
  outline-offset: -1px;
}
.cell {
  display: flex;
  align-items: center;
  gap: 4px;
  padding-left: 4px;
  border: 1px solid transparent;
}
.cell.on {
  background: #cce4fc;
  border-color: #5da0e4;
}
.gallery-scroll {
  display: grid;
  grid-template-rows: repeat(3, 30px);
  width: 22px;
  border: 1px solid #dcdddf;
  height: 90px;
}
.gallery-scroll button {
  display: flex;
  align-items: center;
  justify-content: center;
}
.gallery-scroll button:last-child {
  height: 24px;
}
.check {
  display: flex;
  align-items: center;
  gap: 10px;
  height: 24px;
  color: #1e1e1e;
}
.check input {
  appearance: none;
  width: 17px;
  height: 17px;
  margin: 0;
  border: 1px solid #56719c;
  background: #fff;
}
.check input:checked {
  background: #fff url("data:image/svg+xml,%3Csvg xmlns='http://www.w3.org/2000/svg' viewBox='0 0 15 15'%3E%3Cpath d='M3 7l3.500 4L12 3.500' fill='none' stroke='%23111' stroke-width='2.500'/%3E%3C/svg%3E");
}

/* address bar */
.addressbar {
  flex: none;
  display: flex;
  height: 61px;
  padding: 5px 12px 9px 0;
  border-bottom: 1px solid #bcbcbc;
}
.history {
  display: flex;
  align-items: center;
  width: 158px;
  padding-left: 19px;
}
.history button:nth-child(2) { margin-left: 26px; }
.history button:nth-child(3) { margin-left: 18px; }
.history button:nth-child(4) { margin-left: 18px; }
.path {
  flex: 1;
  display: flex;
  align-items: center;
  border: 1px solid #d9d9d9;
  padding-left: 3px;
}
.path a {
  margin-right: 3px;
}
.crumb {
  margin: 0 11px 0 9px;
}
.history-drop {
  margin-left: auto;
  margin-right: 15px;
}
.refresh {
  display: flex;
  align-items: center;
  justify-content: center;
  width: 46px;
  height: 100%;
  border-left: 1px solid #d9d9d9;
}
.search {
  display: flex;
  align-items: center;
  gap: 20px;
  width: 304px;
  margin-left: 12px;
  padding-left: 20px;
  border: 1px solid #d9d9d9;
}
.search input {
  flex: 1;
  min-width: 0;
  border: 0;
  outline: 0;
  padding: 0;
  font: inherit;
}
.search input::placeholder {
  color: #6d6d6d;
  opacity: 1;
}

/* panes */
.panes {
  flex: 1;
  min-height: 0;
  display: flex;
}
.tree {
  width: 405px;
  flex: none;
  padding-top: 24px;
  overflow: hidden;
}
.node {
  display: flex;
  align-items: center;
  gap: 5px;
  height: 36px;
  padding: 0 4px 0 36px;
}
.node.child { padding-left: 48px; }
.node.gap { margin-top: 12px; }
.node.selected { background: #d9d9d9; }
.node-icon,
.tile-icon,
.file-icon {
  position: relative;
  flex: none;
}
.mini-badge {
  position: absolute;
  left: 0;
  bottom: 0;
}
.node-label {
  flex: 1;
  white-space: nowrap;
}
.scrollbar {
  flex: none;
  display: flex;
  flex-direction: column;
  align-items: center;
  justify-content: space-between;
  width: 25px;
  margin-left: 1px;
  padding: 9px 0 7px;
  background: #f0f0f0;
}
.track {
  flex: 1;
  width: 100%;
  margin: 7px 0 9px;
}
.thumb {
  width: 24px;
  background: #cdcdcd;
}
.tree-thumb { height: 71.6%; }
.main-thumb { height: 40.7%; }
.content {
  flex: 1;
  min-width: 0;
  margin-left: 2px;
  padding: 11px 11px 0 12px;
  border-left: 2px solid #f2f2f2;
  overflow: hidden;
}
h2 {
  display: flex;
  align-items: center;
  gap: 8px;
  height: 28px;
  margin: 0;
  font: inherit;
  color: #1e3287;
}
h2::after {
  content: "";
  flex: 1;
  height: 2px;
  margin-left: 5px;
  background: #e5e5e5;
}
.tiles {
  display: grid;
  grid-template-columns: repeat(auto-fill, 336px);
  gap: 18px 6px;
  padding: 18px 0 33px 11px;
}
.tile {
  display: flex;
  gap: 8px;
  height: 80px;
  padding-left: 29px;
  border: 1px solid transparent;
}
.tile.selected {
  background: #cce8ff;
  border-color: #99d1ff;
}
.tile-icon {
  padding-top: 5px;
  height: 78px;
}
.tile-badge {
  position: absolute;
  left: 0;
  bottom: 3px;
}
.tile-text {
  display: flex;
  flex-direction: column;
  padding-top: 1px;
  white-space: nowrap;
}
.name,
.loc {
  height: 26px;
  line-height: 26px;
}
.loc {
  color: #6d6d6d;
}
.tile-text svg {
  margin: 3px 0 0 1px;
}
.files {
  width: 100%;
  margin-top: 17px;
  border-collapse: collapse;
  table-layout: fixed;
}
.files td {
  height: 39px;
  padding: 0;
  white-space: nowrap;
}
.files .f-icon {
  width: 91px;
  padding-left: 41px;
}
.file-icon {
  display: block;
}
.files .f-name { width: 522px; }
.files .f-path {
  color: #6d6d6d;
  font-size: 19px;
}

/* letters on document icons */
.glyph {
  position: absolute;
  font: 700 10px/12px "Liberation Sans", sans-serif;
  color: #fff;
}
.glyph.doc {
  left: 5px;
  top: 1px;
  font: italic 700 9px/10px "Liberation Serif", serif;
  color: #1d86d0;
}
.glyph.t-doc {
  left: 35px;
  top: 25px;
  font: italic 700 14px/14px "Liberation Serif", serif;
  color: #1d8ad6;
}
.glyph.t-research,
.glyph.t-python {
  left: 25px;
  top: 22px;
  width: 12px;
  font-size: 9px;
}
.glyph.t-studio {
  left: 25px;
  top: 36px;
  font-size: 9px;
}
.glyph.f-md {
  left: 10px;
  top: 12px;
  color: #777;
}
.glyph.f-caj {
  left: 4px;
  top: -1px;
  font-size: 9px;
}

/* status bar */
.status {
  flex: none;
  display: flex;
  align-items: center;
  height: 36px;
  padding: 0 11px 3px 22px;
  color: #1e395b;
}
.status span {
  padding-right: 18px;
  margin-right: 15px;
  border-right: 2px solid #f2f2f2;
  line-height: 18px;
}
.view-switch {
  display: flex;
  gap: 10px;
  margin-left: auto;
}

/* context menu */
.menu {
  position: absolute;
  left: 946px;
  top: 562px;
  width: 331px;
  padding: 5px 2px;
  border: 1px solid #a0a0a0;
  background: #eee;
  box-shadow: 4px 4px 3px -1px rgba(0, 0, 0, 0.5);
}
.menu-item {
  display: flex;
  align-items: center;
  justify-content: space-between;
  width: 100%;
  height: 33px;
  padding: 0 11px 2px 48px;
}
.menu-item.bold { font: 700 18px/24px "Noto Sans", "Noto Sans CJK SC", sans-serif; }
.menu-item.hover { background: #fff; }
.menu hr {
  height: 11px;
  margin: 0 12px;
  border: 0;
  background: linear-gradient(#919191, #919191) 0 5px / 100% 1px no-repeat;
}
</style>
